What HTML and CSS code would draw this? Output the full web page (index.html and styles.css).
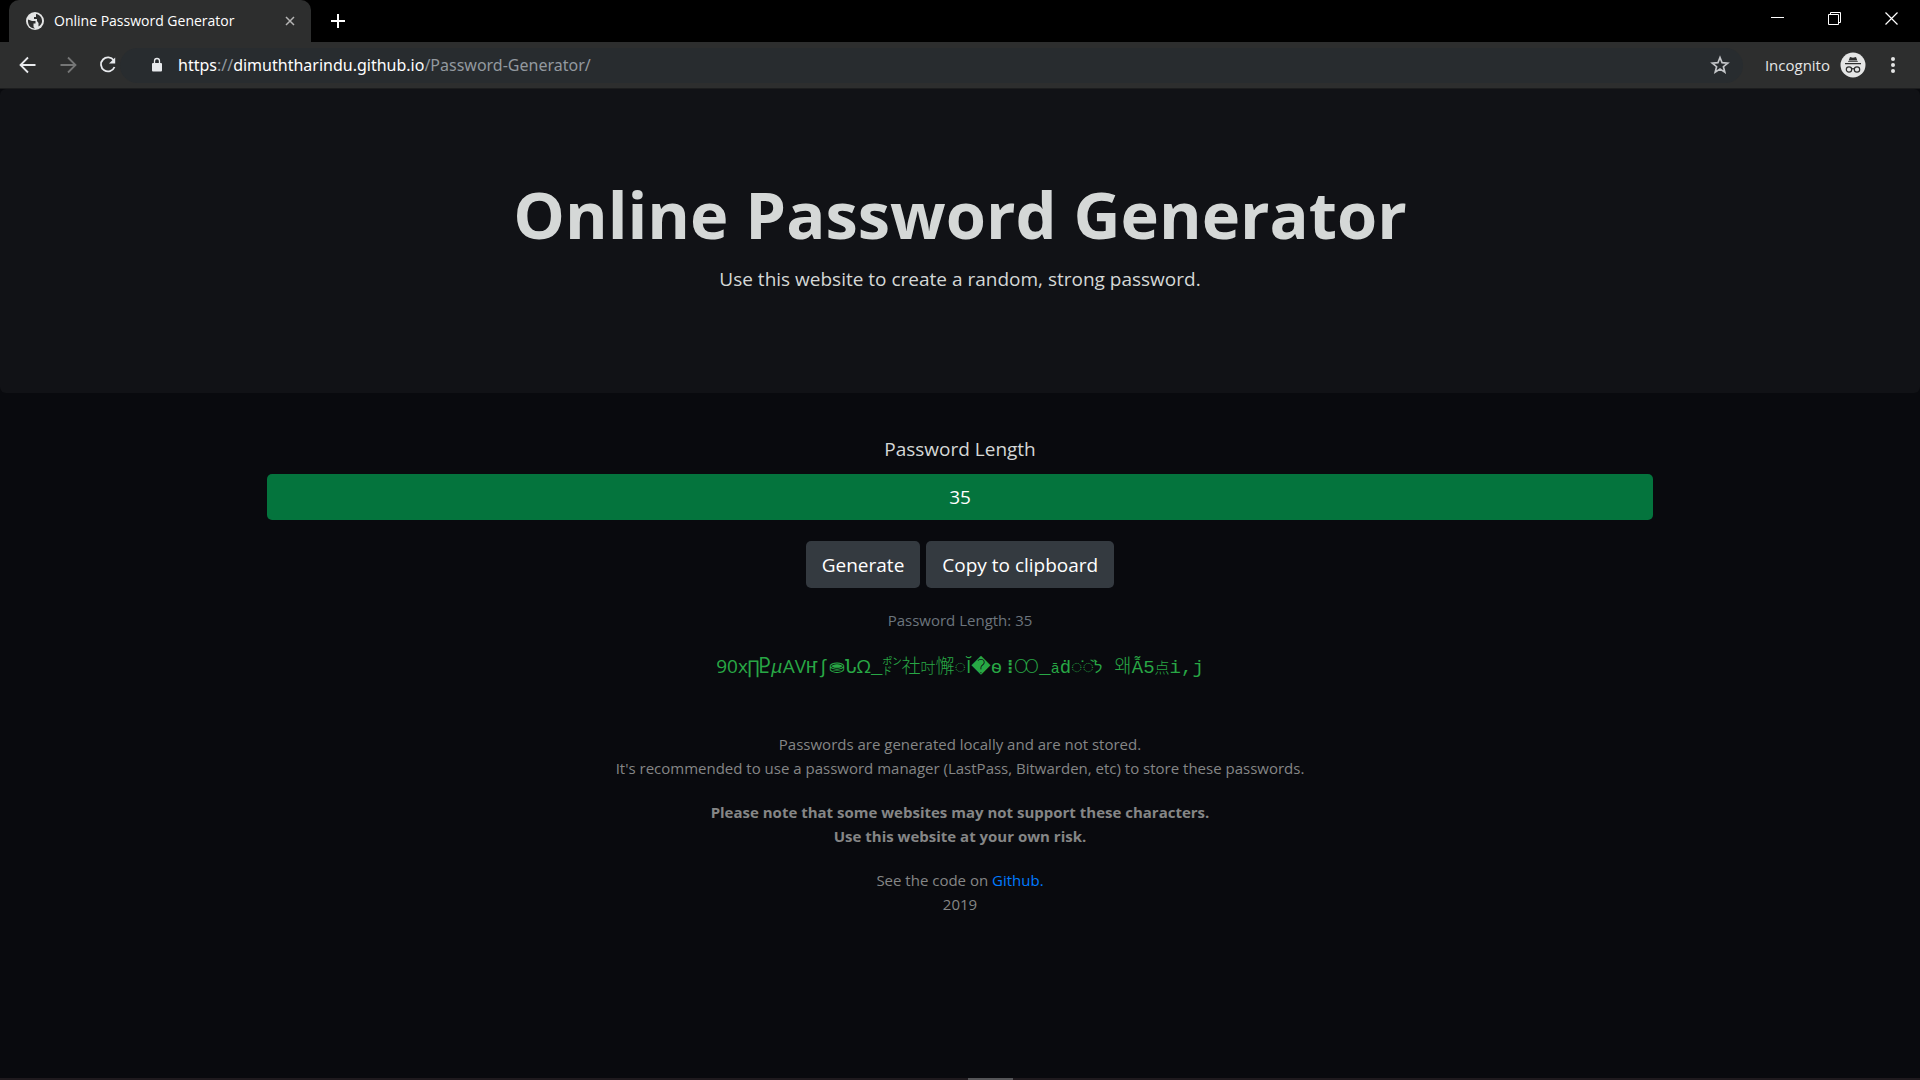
FILE: index.html
```html
<!DOCTYPE html>
<html lang="en">
<head>
<meta charset="utf-8">
<title>Online Password Generator</title>
<link rel="stylesheet" href="styles.css">
</head>
<body>
<header class="browser">
  <div class="tabstrip">
    <div class="tab">
      <svg class="globe" width="18" height="18" viewBox="0 0 18 18"><circle cx="9" cy="9" r="9" fill="#e4e5e5"/><path d="M2 7.500l4 1.500h3.500v2.500H7.500v3.500l1.500 1.500C4 16.500 1.500 12.500 2 7.500zM10 2c4 .5 6.500 4 6 8-.5 2-2 4-3.500 4.500V11L11 9V7H8V5h2z" fill="#2d2e2e"/></svg>
      <span class="tab-title">Online Password Generator</span>
      <button class="icon-btn tab-close" aria-label="Close tab"><svg width="10" height="10" viewBox="0 0 10 10"><path d="M1 1l8 8M9 1l-8 8" stroke="#b5b5b5" stroke-width="1.500"/></svg></button>
    </div>
    <button class="icon-btn new-tab" aria-label="New tab"><svg width="16" height="16" viewBox="0 0 16 16"><path d="M8 1v14M1 8h14" stroke="#fff" stroke-width="2"/></svg></button>
    <div class="window-controls">
      <button class="icon-btn" aria-label="Minimize"><svg width="13" height="13" viewBox="0 0 13 13"><path d="M0 5.500h13" stroke="#fff"/></svg></button>
      <button class="icon-btn" aria-label="Restore"><svg width="13" height="13" viewBox="0 0 13 13"><path d="M.5 2.500h10v10h-10zM2.500 2.500v-2h10v10h-2" fill="none" stroke="#fff"/></svg></button>
      <button class="icon-btn" aria-label="Close"><svg width="13" height="13" viewBox="0 0 13 13"><path d="M.5.5l12 12M12.500.5l-12 12" stroke="#fff" stroke-width="1.200"/></svg></button>
    </div>
  </div>
  <div class="toolbar">
    <button class="icon-btn nav" aria-label="Back"><svg width="20" height="20" viewBox="0 0 20 20"><path d="M17.500 10H3M10 2.500L2.500 10l7.500 7.500" fill="none" stroke="#e8eaed" stroke-width="1.800"/></svg></button>
    <button class="icon-btn nav" aria-label="Forward"><svg width="20" height="20" viewBox="0 0 20 20"><path d="M2.500 10H17M10 2.500l7.500 7.500-7.500 7.500" fill="none" stroke="#757676" stroke-width="1.800"/></svg></button>
    <button class="icon-btn nav" aria-label="Reload"><svg width="20" height="20" viewBox="0 0 20 20"><path d="M15.800 5.500A7 7 0 1 0 16.500 12" fill="none" stroke="#e8eaed" stroke-width="1.800"/><path d="M17.200 2.500V8.500H11z" fill="#e8eaed"/></svg></button>
    <div class="omnibox">
      <svg width="12" height="16" viewBox="0 0 12 16"><path d="M2 6h8q1 0 1 1v6.500q0 1-1 1H2q-1 0-1-1V7q0-1 1-1z" fill="#e8eaed"/><path d="M3.500 6.500V4a2.500 2.500 0 0 1 5 0v2.500" fill="none" stroke="#e8eaed" stroke-width="1.300"/></svg>
      <span class="url">https<span class="dim">://</span>dimuththarindu.github.io<span class="dim">/Password-Generator/</span></span>
      <button class="icon-btn star" aria-label="Bookmark this page"><svg width="20" height="20" viewBox="0 0 20 20"><path d="M10 2.500l2.100 5.200 5.600.4-4.300 3.600 1.400 5.400L10 14.100l-4.800 3 1.400-5.400-4.300-3.600 5.600-.4z" fill="none" stroke="#c3c5c8" stroke-width="1.700"/></svg></button>
    </div>
    <span class="incognito">Incognito</span>
    <svg width="26" height="26" viewBox="0 0 26 26"><circle cx="13" cy="13" r="12.500" fill="#e4e5e5"/><path d="M10 5l3 .7L16 5l1.300 3.500H8.700zM5 11h16v1.200H5zM8.200 9.300h9.600v.8H8z" fill="#2d2e2e"/><g fill="none" stroke="#2d2e2e" stroke-width="1.200"><circle cx="9" cy="17.500" r="2.700"/><circle cx="17" cy="17.500" r="2.700"/><path d="M11.700 17q1.300-.8 2.600 0"/></g></svg>
    <button class="icon-btn menu" aria-label="Menu"><svg width="6" height="18" viewBox="0 0 6 18"><g fill="#e4e5e5"><circle cx="3" cy="3" r="2"/><circle cx="3" cy="9" r="2"/><circle cx="3" cy="15" r="2"/></g></svg></button>
  </div>
</header>
<section class="hero">
  <h1>Online Password Generator</h1>
  <p>Use this website to create a random, strong password.</p>
</section>
<main class="container">
  <label for="length">Password Length</label>
  <input class="length" id="length" type="text" value="35">
  <div class="actions">
    <button class="btn">Generate</button>
    <button class="btn">Copy to clipboard</button>
  </div>
  <p class="count">Password Length: 35</p>
  <p class="password"><span class="sans">90x</span>∏Ⴒ<i>μ</i><span class="sans">AV</span>Ҥ∫⛂Ն<span class="sans">Ω</span>_㍀社<span class="small">吋</span>懈◌<span class="sans">Ĭ</span><span class="deja">�</span><b>ѳ</b><span class="sans"> <b>⁞</b></span><span class="deja">Ꝏ</span>_<span class="small">ā</span><b>ḋ</b>◌̇◌̏<span class="small">ל</span> 왜<b>Ẫ</b>5<span class="small">点</span><b>i,j</b></p>
  <footer class="notes">
    <p>Passwords are generated locally and are not stored.<br>It's recommended to use a password manager (LastPass, Bitwarden, etc) to store these passwords.</p>
    <p><strong>Please note that some websites may not support these characters.<br>Use this website at your own risk.</strong></p>
    <p>See the code on <a href="https://github.com/">Github.</a><br>2019</p>
  </footer>
</main>
<div class="taskbar"><span></span></div>
</body>
</html>
```
FILE: styles.css
```css
* { box-sizing: border-box; }
body {
  margin: 0;
  min-height: 100vh;
  display: flex;
  flex-direction: column;
  background: #090a0e;
  color: #d5d8d7;
  font: 19px/30px "Open Sans", "Noto Sans", sans-serif;
}
h1, p { margin: 0; }
button, input { font: inherit; }
svg { display: block; flex: none; }
.icon-btn {
  display: flex;
  align-items: center;
  justify-content: center;
  border: 0;
  padding: 0;
  background: none;
}
.tabstrip {
  display: flex;
  height: 42px;
  padding-left: 9px;
  background: #000;
}
.tab {
  display: flex;
  align-items: center;
  gap: 10px;
  width: 302px;
  padding: 0 16px 0 17px;
  border-radius: 10px 10px 0 0;
  background: #2d2e2e;
  color: #fff;
  font-size: 14px;
}
.tab-title { flex: 1; white-space: nowrap; }
.new-tab { width: 54px; }
.window-controls { display: flex; margin-left: auto; }
.window-controls .icon-btn { width: 57px; height: 36px; }
.toolbar {
  display: flex;
  align-items: center;
  height: 47px;
  padding-left: 8px;
  border-bottom: 1px solid #1c1d1e;
  background: #2d2e2e;
}
.nav { width: 40px; height: 40px; }
.omnibox {
  display: flex;
  flex: 1;
  align-items: center;
  gap: 15px;
  height: 35px;
  margin-left: -8px;
  margin-right: 22px;
  padding: 0 13px 0 31px;
  border-radius: 18px;
  background: #282c2f;
  font-family: "Noto Sans", sans-serif;
  font-size: 16px;
}
.url { flex: 1; color: #fff; }
.dim { color: #93999f; }
.incognito { margin-right: 10px; color: #e4e5e5; font-size: 15px; line-height: 24px; }
.menu { width: 54px; height: 40px; }
.hero {
  height: 304px;
  padding: 77px 20px;
  border-radius: 6px;
  background: #111216;
  text-align: center;
}
.hero h1 { margin-bottom: 2px; font-size: 65px; line-height: 96px; font-weight: 700; }
.container {
  width: 100%;
  max-width: 1426px;
  margin: 0 auto;
  padding: 41px 20px;
  flex: 1;
  display: flex;
  flex-direction: column;
  align-items: center;
  text-align: center;
}
.length {
  width: 100%;
  height: 46px;
  margin-top: 10px;
  border: 0;
  border-radius: 5px;
  background: #04743d;
  color: #fff;
  text-align: center;
}
.actions { display: flex; gap: 6px; margin-top: 21px; }
.btn {
  height: 47px;
  padding: 0 16px;
  border: 0;
  border-radius: 5px;
  background: #343a40;
  color: #fff;
}
.count { margin-top: 17px; color: #6c757d; font-size: 15px; }
.password {
  height: 30px;
  margin-top: 16px;
  color: #28a745;
  font-family: "Liberation Mono", "Noto Sans CJK JP", "Noto Sans CJK KR", monospace;
  font-weight: 300;
  white-space: nowrap;
}
.sans { font-family: "Open Sans", sans-serif; font-weight: 400; }
.deja { font-family: "DejaVu Sans", sans-serif; }
.small { font-size: 15px; }
.notes {
  display: flex;
  flex-direction: column;
  gap: 20px;
  margin-top: 51px;
  color: #858686;
  font-size: 15px;
  line-height: 24px;
}
.notes a { color: #007bff; text-decoration: none; }
.taskbar { height: 2px; background: #1f1a1e; }
.taskbar span { display: block; width: 45px; height: 2px; margin-left: 50.4%; background: #555558; }
```
